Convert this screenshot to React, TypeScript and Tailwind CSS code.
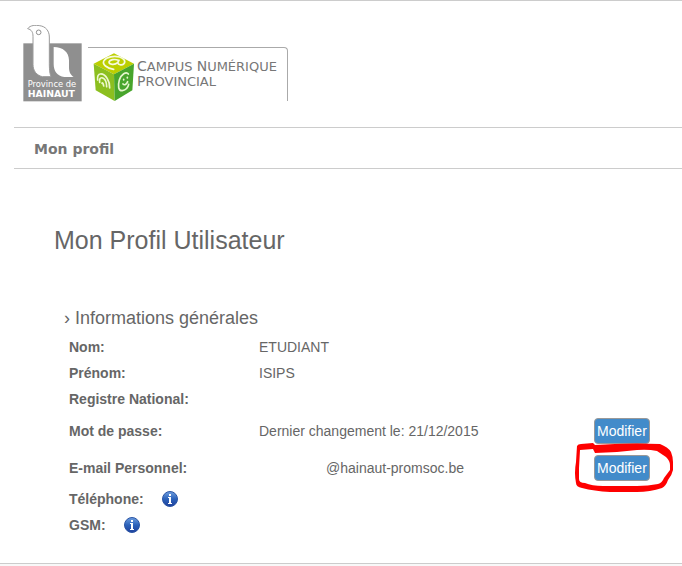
import type { ReactNode } from 'react';

type Row = {
  label: string;
  value?: string;
  help?: boolean;
  editable?: boolean;
  circled?: boolean;
  masked?: boolean;
};

const rows: Row[] = [
  { label: 'Nom:', value: 'ETUDIANT' },
  { label: 'Prénom:', value: 'ISIPS' },
  { label: 'Registre National:' },
  { label: 'Mot de passe:', value: 'Dernier changement le: 21/12/2015', editable: true },
  { label: 'E-mail Personnel:', value: '@hainaut-promsoc.be', editable: true, circled: true, masked: true },
  { label: 'Téléphone:', help: true },
  { label: 'GSM:', help: true },
];

function HainautLogo() {
  return (
    <svg width="60" height="77" viewBox="0 0 180 231" role="img" aria-label="Province de Hainaut">
      <rect x="1" y="55" width="175" height="174" fill="#8f8f8f" />
      <path
        d="M14 11 C22 0 38 0 50 2 C68 4 79 18 79 36 V116 C79 136 81 149 84 155 H58 C41 151 30 138 30 118 V34 C30 22 26 14 14 11 Z"
        fill="#fff"
        stroke="#9a9a9a"
        strokeWidth="3"
      />
      <path d="M92 66 C120 66 138 82 138 106 V126 C138 142 143 150 152 156 H124 C102 153 92 138 92 117 Z" fill="#fff" />
      <circle cx="47" cy="22" r="7" fill="none" stroke="#8f8f8f" strokeWidth="3" />
      <text x="14" y="186" fontSize="25" fontFamily="'DejaVu Sans', sans-serif" fill="#fff">
        Province de
      </text>
      <text x="14" y="217" fontSize="28" fontWeight="700" fontFamily="'DejaVu Sans', sans-serif" fill="#fff">
        HAINAUT
      </text>
    </svg>
  );
}

function CampusCube() {
  return (
    <svg width="42" height="50" viewBox="0 0 126 150" aria-hidden="true" className="shrink-0">
      <path d="M63 4 L123 35 L63 67 L2 35 Z" fill="#bccf00" />
      <path d="M2 35 L63 67 L65 147 L8 115 Z" fill="#8cbf1f" />
      <path d="M123 35 L63 67 L65 147 L118 115 Z" fill="#48a52c" />
      <g fill="none" stroke="#f7fae0" strokeWidth="5" strokeLinecap="round" strokeLinejoin="round">
        <path d="M62 52 C42 49 26 37 33 26 C41 14 62 11 80 15 C94 19 99 29 92 36 C86 41 76 38 74 32" />
        <path d="M76 25 C66 20 50 23 48 30 C48 38 65 40 74 32 L78 25" />
      </g>
      <g fill="none" stroke="#eef8cf" strokeWidth="5" strokeLinecap="round">
        <path d="M14 84 C10 60 31 61 43 80 C49 89 50 98 50 108" />
        <path d="M20 91 C17 72 32 75 38 87 C41 94 41 99 41 104" />
        <path d="M27 94 C28 91 31 94 32 102" />
      </g>
      <g fill="none" stroke="#e5f6cd" strokeWidth="5" strokeLinecap="round">
        <path d="M106 66 C100 57 84 67 79 84 C74 102 76 117 88 116 C98 114 105 107 107 97" />
        <path d="M92 82 V84 M103 76 V78 M90 96 C94 101 101 97 104 89" />
      </g>
    </svg>
  );
}

function InfoIcon() {
  return (
    <svg width="16" height="16" viewBox="0 0 16 16" aria-hidden="true">
      <defs>
        <linearGradient id="info-fill" x1="0" y1="0" x2="0" y2="1">
          <stop offset="0" stopColor="#6f9fe0" />
          <stop offset="0.5" stopColor="#2c62ba" />
          <stop offset="1" stopColor="#1f419c" />
        </linearGradient>
      </defs>
      <circle cx="8" cy="8" r="7.5" fill="url(#info-fill)" stroke="#2b55a5" />
      <path d="M7 3 H9 V5 H7 Z M6 6 H9 V12 H10 V13 H6 V12 H7 V7 H6 Z" fill="#fff" />
    </svg>
  );
}

function EditButton({ children }: { children?: ReactNode }) {
  return (
    <div className="relative w-max">
      <button
        type="button"
        className="block h-[26px] rounded border border-[#999] bg-[#428bca] px-[2px] text-sm leading-5 text-white"
      >
        Modifier
      </button>
      {children}
    </div>
  );
}

function RedCircle() {
  return (
    <svg
      width="100"
      height="52"
      viewBox="0 0 100 52"
      aria-hidden="true"
      className="pointer-events-none absolute -left-5 -top-3.5 max-w-none"
    >
      <path
        fill="#fe0000"
        fillRule="evenodd"
        d="M3 5 Q4 3 7 3 L19 2 L21 4 L41 3 Q62 2 86 3 Q94 6 97 11 Q99 16 99 21 V29 Q98 34 94 39 Q92 45 88 47 Q76 51 63 51 H36 Q20 50 8 47 Q2 46 2 42 Q0 32 2 21 Z
        M6 9 L19 8 L21 12 L43 11 L63 9 Q74 8 83 10 L92 16 Q96 20 96 24 V29 L90 37 Q88 42 84 43 Q74 45 63 45 H29 Q18 45 11 42 Q5 42 5 38 L5 27 Z"
      />
    </svg>
  );
}

export default function App() {
  return (
    <div className="border-t border-[#ccc] bg-white font-['Liberation_Sans',Arial,sans-serif] text-[#666]">
      <header className="flex items-start gap-[5px] pl-[23px] pt-6">
        <HainautLogo />
        <div className="mt-[22px] flex h-[54px] w-[200px] gap-[2px] rounded-tr border-r border-t border-[#aaa] pl-[5px] pt-1">
          <CampusCube />
          <p className="whitespace-nowrap pt-[7px] font-['DejaVu_Sans',sans-serif] text-[13px] uppercase leading-[14px] text-[#777]">
            <span className="text-sm leading-[14px]">C</span>ampus <span className="text-sm leading-[14px]">N</span>umérique
            <br />
            <span className="text-sm leading-[14px]">P</span>rovincial
          </p>
        </div>
      </header>

      <nav className="ml-[14px] mt-[25px] flex border-y border-[#ccc] px-5 pb-[9px] pt-[11px]">
        <a href="#profil" className="font-['DejaVu_Sans',sans-serif] text-sm font-bold leading-5 text-[#777]">
          Mon profil
        </a>
      </nav>

      <main id="profil" className="pb-[25px] pl-[54px] pt-[55px]">
        <h1 className="text-[25px] leading-8">Mon Profil Utilisateur</h1>

        <h2 className="mt-[50px] pl-[10px] text-lg leading-6">› Informations générales</h2>
        <table className="ml-[15px] mt-1 text-sm">
          <tbody>
            {rows.map((row) => (
              <tr key={row.label} className={row.editable ? 'h-[37px]' : 'h-[26px]'}>
                <th scope="row" className="w-[190px] p-0 text-left font-bold">
                  <span className="flex items-center gap-[18px]">
                    {row.label}
                    {row.help && <InfoIcon />}
                  </span>
                </th>
                <td className={row.masked ? 'w-[335px] p-0 pl-[67px]' : 'w-[335px] p-0'}>{row.value}</td>
                <td className="p-0">
                  {row.editable && <EditButton>{row.circled && <RedCircle />}</EditButton>}
                </td>
              </tr>
            ))}
          </tbody>
        </table>
      </main>

      <footer className="h-[3px] border-t border-[#ccc] bg-[#f8f8f8]" />
    </div>
  );
}
